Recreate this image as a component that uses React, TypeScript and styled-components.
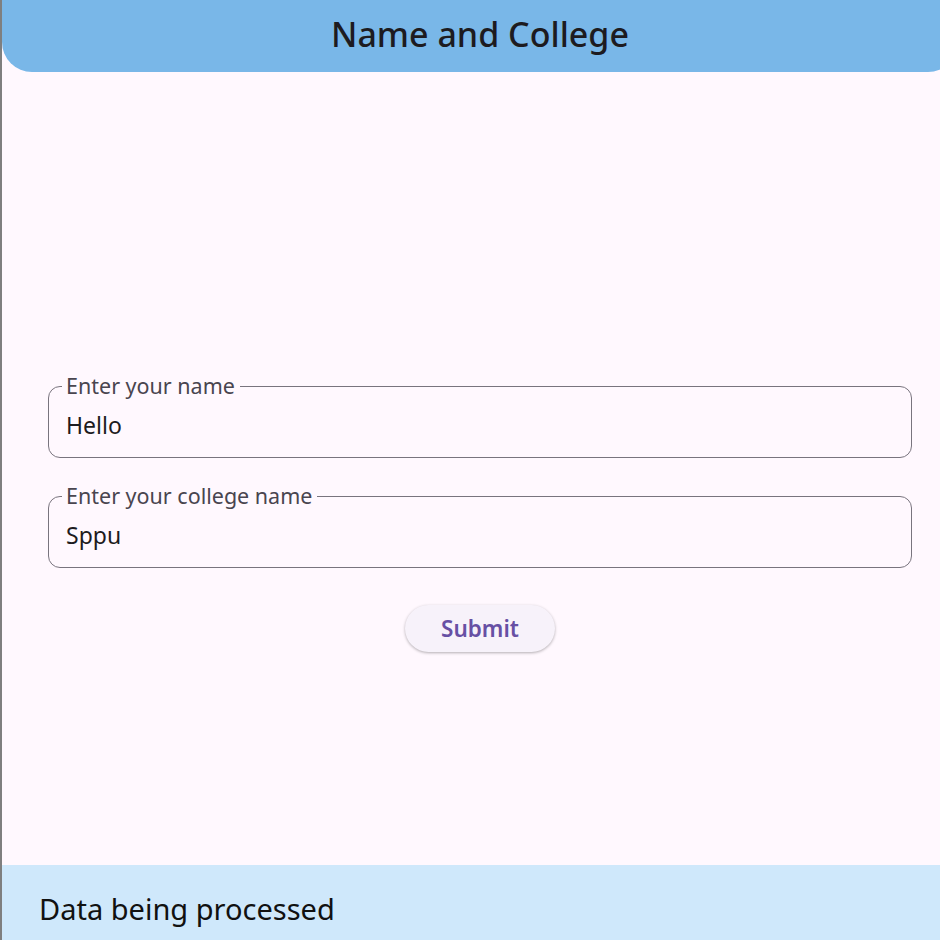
import React from 'react'
import styled, { createGlobalStyle } from 'styled-components'

const GlobalStyle = createGlobalStyle`
  html, body {
    margin: 0;
    padding: 0;
    height: 100%;
    overflow: hidden;
    background: #7f7f7f;
  }
  body {
    font-family: "Noto Sans", "Open Sans", sans-serif;
  }
`

const Screen = styled.div`
  margin-left: 2px;
  width: 956px;
  height: 940px;
  background: #fff8fe;
  display: flex;
  flex-direction: column;
`

const Header = styled.header`
  height: 72px;
  flex: none;
  box-sizing: border-box;
  padding-bottom: 5px;
  background: #79b7e8;
  border-radius: 0 0 30px 30px;
  display: flex;
  align-items: center;
  justify-content: center;
`

const Title = styled.h1`
  margin: 0;
  font-size: 34px;
  font-weight: 500;
  color: #1d1b20;
`

const Body = styled.main`
  flex: 1;
  display: flex;
  flex-direction: column;
  padding: 303px 46px 0;
  gap: 27px;
`

const Field = styled.fieldset`
  margin: 0;
  padding: 0 17px 4px 13px;
  border: 1px solid #79747e;
  border-radius: 12px;
`

const Label = styled.legend`
  padding: 0 5px 0 4px;
  font-size: 21.5px;
  line-height: 22px;
  color: #49454f;
`

const Input = styled.input`
  display: block;
  width: 100%;
  box-sizing: border-box;
  border: none;
  outline: none;
  background: transparent;
  padding: 0 0 0 4px;
  height: 56px;
  font-family: inherit;
  font-size: 23px;
  color: #1d1b20;
`

const Actions = styled.div`
  display: flex;
  justify-content: center;
  margin-top: 10px;
`

const Button = styled.button`
  width: 150px;
  height: 47px;
  border: none;
  border-radius: 24px;
  background: #f7f2fa;
  box-shadow: 0 1px 3px rgba(0, 0, 0, 0.3);
  font-family: inherit;
  font-size: 22.5px;
  font-weight: 600;
  color: #6750a4;
  cursor: pointer;
`

const SnackBar = styled.footer`
  height: 75px;
  flex: none;
  box-sizing: border-box;
  background: #cfe8fb;
  display: flex;
  align-items: center;
  padding: 12px 0 0 37px;
  font-size: 29px;
  color: #111;
`

const fields = [
  { label: 'Enter your name', value: 'Hello' },
  { label: 'Enter your college name', value: 'Sppu' },
]

const App: React.FC = () => {
  return (
    <>
      <GlobalStyle />
      <Screen>
        <Header>
          <Title>Name and College</Title>
        </Header>
        <Body>
          {fields.map(field => (
            <Field key={field.label}>
              <Label>{field.label}</Label>
              <Input defaultValue={field.value} />
            </Field>
          ))}
          <Actions>
            <Button>Submit</Button>
          </Actions>
        </Body>
        <SnackBar>Data being processed</SnackBar>
      </Screen>
    </>
  )
}

export default App
